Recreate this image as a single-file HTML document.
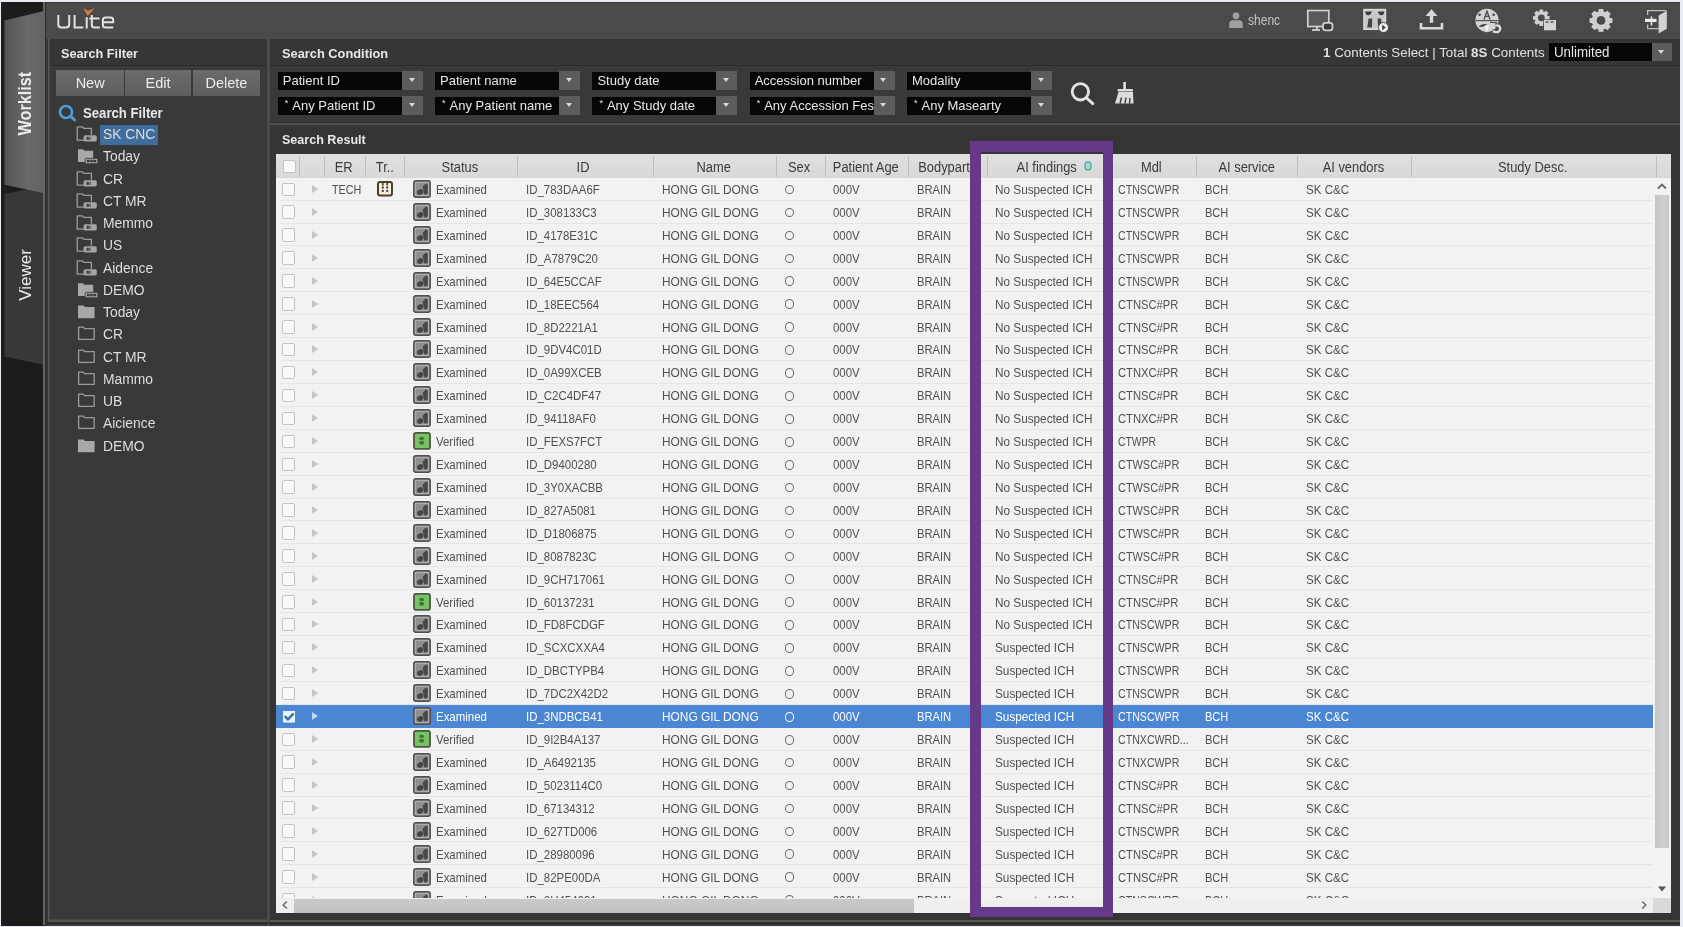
<!DOCTYPE html>
<html><head><meta charset="utf-8">
<style>
*{box-sizing:border-box;margin:0;padding:0}
html,body{width:1683px;height:927px;overflow:hidden;background:#e9edf3;font-family:"Liberation Sans",sans-serif}
.abs{position:absolute;white-space:nowrap}
.ico{position:absolute}
#app{position:absolute;left:1px;top:2px;width:1679px;height:923.5px;background:#474747}
#side{position:absolute;left:1px;top:2px;width:43.5px;height:923.5px;background:#1c1c1c}
#sideline{position:absolute;left:43px;top:2px;width:1.6px;height:923px;background:#646464}
#sideline2{position:absolute;left:44.6px;top:2px;width:1.5px;height:923px;background:#2c2c2c}
#sideline3{position:absolute;left:46.1px;top:38.5px;width:1.5px;height:887px;background:#363636}
#sideline4{position:absolute;left:47.6px;top:38.5px;width:1.9px;height:884px;background:#595959}
.vt{position:absolute;color:#ececec;font-size:17px;transform:rotate(-90deg);transform-origin:center;white-space:nowrap;text-align:center;width:80px;height:20px;line-height:20px}
#top{position:absolute;left:46.3px;top:2px;width:1633.7px;height:36.8px;background:#4a4a4a;border-top:1.6px solid #393939}
.panel{position:absolute;background:#393939}
.ph{position:absolute;background:#363636;border-bottom:1.3px solid #2b2b2b}
.pt{position:absolute;color:#e8e8e8;font-weight:bold;font-size:13.5px;white-space:nowrap;transform-origin:left}
.btn{position:absolute;top:70px;height:26px;background:linear-gradient(#6b6b6b,#5e5e5e);color:#ececec;font-size:14.5px;text-align:center;line-height:26px}
.ti{position:absolute;left:76px;height:22px;width:180px}
.fi{position:absolute;left:0;top:3px}
.tt{position:absolute;left:23.8px;top:2px;height:20px;line-height:20px;color:#dedede;font-size:14px;padding:0 3.5px;white-space:nowrap}
.tt span{display:inline-block;transform:scaleX(0.99);transform-origin:left;position:relative;top:-0.8px}
.tt.hl{width:58px}
.tt.hl{background:#3e6d9e}
.dd{position:absolute;width:145px;height:18px}
.ddt{position:absolute;left:0;top:0;width:124px;height:18px;background:#060606;color:#e8e8e8;font-size:13px;line-height:18px;padding-left:5px;white-space:nowrap;overflow:hidden}
.dda{position:absolute;left:124px;top:-1px;width:21px;height:19px;background:#5c5c5c}
.dda:after{content:"";position:absolute;left:6.8px;top:7.2px;border-left:3.7px solid transparent;border-right:3.7px solid transparent;border-top:4.3px solid #d8d8d8}
.ast{font-size:9px;position:relative;top:-4px;margin-right:4px;margin-left:2px}
#table{position:absolute;left:276.2px;top:154px;width:1394.8px;height:759px;background:#f1f1f1;overflow:hidden}
#thead{position:absolute;left:0;top:0;width:100%;height:24px;background:linear-gradient(#e0e0e0,#d8d8d8)}
.hc{position:absolute;top:1px;height:24px;line-height:24px;text-align:center;color:#3a3a3a;font-size:14px;white-space:nowrap}
.hc span{display:inline-block;transform:scaleX(0.92)}
.hsep{position:absolute;top:2px;width:1px;height:21px;background:#bdbdbd}
#tbody{position:absolute;left:0;top:24px;width:1376.8px;height:720px;overflow:hidden}
.row{position:absolute;left:0;width:100%;height:22.92px;background:#f2f2f2}
.row:after{content:"";position:absolute;left:4px;right:0;bottom:0;height:1px;background:#e5e5e5}
.row.sel{background:#4a86d2}
.row.sel:after{background:#4a86d2}
.row .c{position:absolute;top:1.3px;line-height:22px;font-size:13px;color:#505050;white-space:nowrap;transform-origin:left}
.row.sel .c{color:#fff}
.sexo{position:absolute;top:7.1px;width:9.6px;height:9.7px;border:1.5px solid #6c6c6c;border-radius:50%}
.row.sel .sexo{border-color:#fff}
.cb{position:absolute;left:5.5px;top:4.8px;width:13.5px;height:13.5px;border:1.5px solid #c4c4c4;border-radius:2px;background:#f9f9f9}
.cb.chk{border:none;background:none;left:6.6px;top:3.8px;width:12.4px;height:11.6px}
.tri{position:absolute;left:36px;top:7.3px;border-top:4.3px solid transparent;border-bottom:4.3px solid transparent;border-left:6px solid #c4c4c4}
.row.sel .tri{border-left-color:#bcd8f5}
.sicon{position:absolute;left:136.8px;top:2.3px;width:18px;height:18px}
.tricon{position:absolute;left:100.80000000000001px;top:3.5px}
#vscroll{position:absolute;left:1376.8px;top:24px;width:18px;height:720px;background:#f3f3f3}
#vthumb{position:absolute;left:1378.8px;top:40.5px;width:14px;height:653.0px;background:linear-gradient(90deg,#c4c4c4,#d0d0d0 60%,#c6c6c6)}
#hscroll{position:absolute;left:0;top:743.5px;width:1376.8px;height:15.5px;background:#efefef}
#hthumb{position:absolute;left:18.30000000000001px;top:744.5px;width:619.5px;height:14.0px;background:linear-gradient(#c9c9c9,#c2c2c2)}
#corner{position:absolute;left:1376.8px;top:743.5px;width:18px;height:15.5px;background:#d9d9d9}
#purple{position:absolute;left:970px;top:141px;width:143px;height:776px;border:solid #653a88;border-width:11px 10px 10px 11px}
.arr{position:absolute;color:#555;font-size:11px}
</style></head><body>
<div id="root" style="position:absolute;left:0;top:0;width:1683px;height:927px;will-change:transform">
<div id="app"></div>
<div id="side"></div>
<svg class="ico" style="left:0;top:0" width="46" height="400" viewBox="0 0 46 400">
<defs><linearGradient id="gw" x1="0" x2="1" y1="0" y2="0"><stop offset="0" stop-color="#555555"/><stop offset="0.6" stop-color="#696969"/><stop offset="1" stop-color="#626262"/></linearGradient></defs>
<path d="M4.5 194 L44 186 L44 365 L4.5 356.4 Z" fill="#383838"/>
<path d="M4.5 20.5 L44 11 L44 193.2 L4.5 184.8 Z" fill="url(#gw)"/>
</svg>
<div id="sideline"></div>
<div id="sideline2"></div>
<div id="sideline3"></div>
<div id="sideline4"></div>
<div class="vt" style="left:-15.2px;top:93.5px;font-weight:bold;font-size:17.5px"><span style="display:inline-block;transform:scaleX(0.925)">Worklist</span></div>
<div class="vt" style="left:-14.2px;top:265.2px">Viewer</div>
<div id="top"></div>
<svg class="ico" style="left:54px;top:5px" width="64" height="28" viewBox="54 5 64 28">
<g fill="none" stroke="#e2e2e2" stroke-width="2.0" stroke-linecap="butt">
<path d="M58.3 15 V24.5 Q58.3 27.6 61.5 27.6 H66 Q69.2 27.6 69.2 24.5 V15"/>
<path d="M74.6 15 V27.6 H83.3"/>
<path d="M86.7 17.2 V28.6"/>
<path d="M89.3 18.4 H99.5 M91.8 15 V25 Q91.8 27.6 94.5 27.6 H99.8"/>
<path d="M113.2 27.6 H105.5 Q102.9 27.6 102.9 25 V20 Q102.9 17.4 105.5 17.4 H110.6 Q113.2 17.4 113.2 20 V22.3 H103.5"/>
</g>
<path d="M83 8 L88 10.8 L94.5 8.2 L87.8 16 Z" fill="#d97b35"/>
</svg>

<svg class="ico" style="left:1228px;top:11px" width="16" height="18" viewBox="0 0 16 18"><circle cx="8" cy="4.8" r="3.4" fill="#a0a0a0"/><path d="M1.2 17 V13 Q1.2 9.2 5 9.2 H11 Q14.8 9.2 14.8 13 V17 Z" fill="#a0a0a0"/></svg>
<div class="abs" style="left:1248px;top:11.5px;color:#c4c4c4;font-size:14px;transform:scaleX(0.86);transform-origin:left">shenc</div>
<svg class="ico" style="left:1306px;top:9px" width="28" height="23" viewBox="0 0 28 23"><rect x="1.8" y="1.5" width="21" height="16" fill="#5a5a5a" stroke="#d0d0d0" stroke-width="1.7"/><path d="M6 21 H14" stroke="#d0d0d0" stroke-width="1.8"/><path d="M11 17.5 V21" stroke="#d0d0d0" stroke-width="1.8"/><rect x="17" y="13.8" width="9.5" height="7.5" rx="2.5" fill="#3a3a3a" stroke="#d0d0d0" stroke-width="1.8"/></svg>
<svg class="ico" style="left:1362px;top:8px" width="30" height="26" viewBox="0 0 30 26"><rect x="2" y="1.6" width="21.4" height="19.6" fill="#c8c8c8" stroke="#d8d8d8" stroke-width="1.6"/><path d="M3.2 3.4 H9.8 Q9 7.2 6.3 7.2 Q3.5 7.2 3.2 3.4 Z M16 3.4 H22.4 Q22 7.2 19.2 7.2 Q16.6 7.2 16 3.4 Z" fill="#3c3c3c"/><path d="M5.2 19.6 L6.6 10.4 H10.2 L10 19.6 Z M15.5 10.6 H19 L19.8 17 L16 18 Z" fill="#444"/><circle cx="21.5" cy="19.5" r="5" fill="#ececec" stroke="#3a3a3a" stroke-width="0.8"/><path d="M20.3 16.8 L23.6 19.5 L20.3 22.4 Z" fill="#333"/></svg>
<svg class="ico" style="left:1419px;top:8px" width="25" height="22" viewBox="0 0 25 22"><path d="M12.5 1.2 L18.5 8 H14.2 V14.8 H10.8 V8 H6.5 Z" fill="#d8d8d8"/><path d="M2 15 V20.2 H23 V15" fill="none" stroke="#d8d8d8" stroke-width="2.6"/></svg>
<svg class="ico" style="left:1474px;top:8px" width="29" height="26" viewBox="0 0 29 26"><circle cx="13" cy="12.3" r="11.6" fill="#d4d4d4"/><path d="M1.4 12.6 H24.6" stroke="#4a4a4a" stroke-width="1.1"/><path d="M10 11.5 L13 3.2 L16 11.5 M11.3 8.3 H14.7" stroke="#4a4a4a" stroke-width="1.3" fill="none"/><circle cx="5.6" cy="6.8" r="1.3" fill="#444"/><circle cx="19.6" cy="6.8" r="1.3" fill="#444"/><path d="M4.5 18.5 Q8.5 14.6 13.5 16.6 Q9 20 4.5 18.5 Z" fill="#444"/><path d="M10.6 17.6 L12.7 25 L15 17.6 Z" fill="#f0f0f0"/><path d="M18.8 23.4 Q26 25.6 26.2 20.6 Q26.2 16.6 21.2 17.6" stroke="#4a4a4a" stroke-width="4.5" fill="none"/><path d="M18.8 23.4 Q26 25.6 26.2 20.6 Q26.2 16.6 21.2 17.6" stroke="#dcdcdc" stroke-width="2.4" fill="none"/><path d="M16 14.5 H23 M17 14.5 v-1" stroke="#4a4a4a" stroke-width="1"/></svg>
<svg class="ico" style="left:1532px;top:8px" width="26" height="24" viewBox="0 0 26 24"><path d="M7.85 3.98 L8.02 2.11 L10.58 2.11 L10.75 3.98 L12.39 4.66 L13.84 3.45 L15.65 5.26 L14.44 6.71 L15.12 8.35 L16.99 8.52 L16.99 11.08 L15.12 11.25 L14.44 12.89 L15.65 14.34 L13.84 16.15 L12.39 14.94 L10.75 15.62 L10.58 17.49 L8.02 17.49 L7.85 15.62 L6.21 14.94 L4.76 16.15 L2.95 14.34 L4.16 12.89 L3.48 11.25 L1.61 11.08 L1.61 8.52 L3.48 8.35 L4.16 6.71 L2.95 5.26 L4.76 3.45 L6.21 4.66 Z" fill="#d0d0d0" stroke="#d0d0d0" stroke-width="1.2" stroke-linejoin="round"/><circle cx="9.3" cy="9.8" r="3.4" fill="#4a4a4a"/><rect x="11.3" y="11.3" width="13.5" height="11.5" fill="#4a4a4a"/><rect x="12" y="12" width="12" height="10.3" fill="#d4d4d4"/><path d="M13.5 14 h3 M18.5 14 h3" stroke="#555" stroke-width="1.5"/></svg>
<svg class="ico" style="left:1588px;top:7.5px" width="26" height="25" viewBox="0 0 26 25"><path d="M10.93 4.05 L11.21 1.65 L14.79 1.65 L15.07 4.05 L17.44 5.03 L19.34 3.53 L21.87 6.06 L20.37 7.96 L21.35 10.33 L23.75 10.61 L23.75 14.19 L21.35 14.47 L20.37 16.84 L21.87 18.74 L19.34 21.27 L17.44 19.77 L15.07 20.75 L14.79 23.15 L11.21 23.15 L10.93 20.75 L8.56 19.77 L6.66 21.27 L4.13 18.74 L5.63 16.84 L4.65 14.47 L2.25 14.19 L2.25 10.61 L4.65 10.33 L5.63 7.96 L4.13 6.06 L6.66 3.53 L8.56 5.03 Z" fill="#cfcfcf" stroke="#cfcfcf" stroke-width="1.4" stroke-linejoin="round"/><circle cx="13" cy="12.4" r="4.4" fill="#4a4a4a"/></svg>
<svg class="ico" style="left:1643px;top:9px" width="26" height="26" viewBox="0 0 26 26"><path d="M4.6 6 V1.7 H23.3 M4.6 15.5 V19.7 H16" fill="none" stroke="#bdbdbd" stroke-width="1.3"/><path d="M15.6 6.5 L23.8 1.7 V19.7 L15.6 24.6 Z" fill="#d2d2d2"/><path d="M2 9.8 H13.5 V13 H2 Z" fill="#ececec"/><path d="M8.5 7.5 V16.5" stroke="#e4e4e4" stroke-width="1.6"/></svg>


<!-- Search filter panel -->
<div class="panel" style="left:49.5px;top:39px;width:217.5px;height:880px"></div>
<div class="ph" style="left:49.5px;top:39px;width:217.5px;height:27px"></div>
<div class="pt" style="left:61.4px;top:45.5px;transform:scaleX(0.94)">Search Filter</div>
<div class="btn" style="left:56.4px;width:67.5px">New</div>
<div class="btn" style="left:125px;width:66.2px">Edit</div>
<div class="btn" style="left:192.6px;width:67.7px">Delete</div>
<svg class="ico" style="left:58px;top:104px" width="19" height="18" viewBox="0 0 19 18"><circle cx="8" cy="8" r="6" fill="none" stroke="#4e9bd6" stroke-width="2.6"/><path d="M12.5 12.2 L16.5 16" stroke="#4e9bd6" stroke-width="3" stroke-linecap="round"/></svg>
<div class="pt" style="left:82.8px;top:105px;font-size:14px;transform:scaleX(0.94)">Search Filter</div>
<div class="ti" style="top:123.0px"><div class="fi"><svg width="22" height="16" viewBox="0 0 22 16"><path d="M8 14.2 H1.2 V0.9 H6.4 L7.8 2.3 H15.4 V8.8" fill="none" stroke="#9c9c9c" stroke-width="1.3" stroke-linejoin="round"/><rect x="7.6" y="9.2" width="13.2" height="6.2" rx="1.6" fill="#a6a6a6"/><rect x="10.6" y="10.8" width="2.2" height="3" fill="#3a3a3a"/><rect x="13.3" y="10.8" width="1.5" height="3" fill="#555"/></svg></div><span class="tt hl"><span>SK CNC</span></span></div>
<div class="ti" style="top:145.2px"><div class="fi"><svg width="22" height="16" viewBox="0 0 22 16"><path d="M2 1.2 H7 L8.5 2.7 H17.2 V10.2 H10 V14 H2 Z" fill="#a8a8a8"/><rect x="9.2" y="10.3" width="12.6" height="5.4" rx="1" fill="#a8a8a8" stroke="#383838" stroke-width="0.8"/><rect x="10.8" y="11.8" width="9.4" height="2.4" fill="#3c3c3c"/><path d="M13.8 11.8 V14.2 M17 11.8 V14.2" stroke="#999" stroke-width="0.6"/></svg></div><span class="tt"><span>Today</span></span></div>
<div class="ti" style="top:167.5px"><div class="fi"><svg width="22" height="16" viewBox="0 0 22 16"><path d="M8 14.2 H1.2 V0.9 H6.4 L7.8 2.3 H15.4 V8.8" fill="none" stroke="#9c9c9c" stroke-width="1.3" stroke-linejoin="round"/><rect x="7.6" y="9.2" width="13.2" height="6.2" rx="1.6" fill="#a6a6a6"/><rect x="10.6" y="10.8" width="2.2" height="3" fill="#3a3a3a"/><rect x="13.3" y="10.8" width="1.5" height="3" fill="#555"/></svg></div><span class="tt"><span>CR</span></span></div>
<div class="ti" style="top:189.8px"><div class="fi"><svg width="22" height="16" viewBox="0 0 22 16"><path d="M8 14.2 H1.2 V0.9 H6.4 L7.8 2.3 H15.4 V8.8" fill="none" stroke="#9c9c9c" stroke-width="1.3" stroke-linejoin="round"/><rect x="7.6" y="9.2" width="13.2" height="6.2" rx="1.6" fill="#a6a6a6"/><rect x="10.6" y="10.8" width="2.2" height="3" fill="#3a3a3a"/><rect x="13.3" y="10.8" width="1.5" height="3" fill="#555"/></svg></div><span class="tt"><span>CT MR</span></span></div>
<div class="ti" style="top:212.0px"><div class="fi"><svg width="22" height="16" viewBox="0 0 22 16"><path d="M8 14.2 H1.2 V0.9 H6.4 L7.8 2.3 H15.4 V8.8" fill="none" stroke="#9c9c9c" stroke-width="1.3" stroke-linejoin="round"/><rect x="7.6" y="9.2" width="13.2" height="6.2" rx="1.6" fill="#a6a6a6"/><rect x="10.6" y="10.8" width="2.2" height="3" fill="#3a3a3a"/><rect x="13.3" y="10.8" width="1.5" height="3" fill="#555"/></svg></div><span class="tt"><span>Memmo</span></span></div>
<div class="ti" style="top:234.2px"><div class="fi"><svg width="22" height="16" viewBox="0 0 22 16"><path d="M8 14.2 H1.2 V0.9 H6.4 L7.8 2.3 H15.4 V8.8" fill="none" stroke="#9c9c9c" stroke-width="1.3" stroke-linejoin="round"/><rect x="7.6" y="9.2" width="13.2" height="6.2" rx="1.6" fill="#a6a6a6"/><rect x="10.6" y="10.8" width="2.2" height="3" fill="#3a3a3a"/><rect x="13.3" y="10.8" width="1.5" height="3" fill="#555"/></svg></div><span class="tt"><span>US</span></span></div>
<div class="ti" style="top:256.5px"><div class="fi"><svg width="22" height="16" viewBox="0 0 22 16"><path d="M8 14.2 H1.2 V0.9 H6.4 L7.8 2.3 H15.4 V8.8" fill="none" stroke="#9c9c9c" stroke-width="1.3" stroke-linejoin="round"/><rect x="7.6" y="9.2" width="13.2" height="6.2" rx="1.6" fill="#a6a6a6"/><rect x="10.6" y="10.8" width="2.2" height="3" fill="#3a3a3a"/><rect x="13.3" y="10.8" width="1.5" height="3" fill="#555"/></svg></div><span class="tt"><span>Aidence</span></span></div>
<div class="ti" style="top:278.8px"><div class="fi"><svg width="22" height="16" viewBox="0 0 22 16"><path d="M2 1.2 H7 L8.5 2.7 H17.2 V10.2 H10 V14 H2 Z" fill="#a8a8a8"/><rect x="9.2" y="10.3" width="12.6" height="5.4" rx="1" fill="#a8a8a8" stroke="#383838" stroke-width="0.8"/><rect x="10.8" y="11.8" width="9.4" height="2.4" fill="#3c3c3c"/><path d="M13.8 11.8 V14.2 M17 11.8 V14.2" stroke="#999" stroke-width="0.6"/></svg></div><span class="tt"><span>DEMO</span></span></div>
<div class="ti" style="top:301.0px"><div class="fi"><svg width="22" height="16" viewBox="0 0 22 16"><path d="M2 1.5 H7.5 L9 3 H18.6 V14.2 H2 Z" fill="#a8a8a8"/></svg></div><span class="tt"><span>Today</span></span></div>
<div class="ti" style="top:323.2px"><div class="fi"><svg width="22" height="16" viewBox="0 0 22 16"><path d="M2.6 13.3 V1.2 H7.3 L8.6 2.6 H18.2 V13.3 Z" fill="none" stroke="#9c9c9c" stroke-width="1.3" stroke-linejoin="round"/></svg></div><span class="tt"><span>CR</span></span></div>
<div class="ti" style="top:345.5px"><div class="fi"><svg width="22" height="16" viewBox="0 0 22 16"><path d="M2.6 13.3 V1.2 H7.3 L8.6 2.6 H18.2 V13.3 Z" fill="none" stroke="#9c9c9c" stroke-width="1.3" stroke-linejoin="round"/></svg></div><span class="tt"><span>CT MR</span></span></div>
<div class="ti" style="top:367.8px"><div class="fi"><svg width="22" height="16" viewBox="0 0 22 16"><path d="M2.6 13.3 V1.2 H7.3 L8.6 2.6 H18.2 V13.3 Z" fill="none" stroke="#9c9c9c" stroke-width="1.3" stroke-linejoin="round"/></svg></div><span class="tt"><span>Mammo</span></span></div>
<div class="ti" style="top:390.0px"><div class="fi"><svg width="22" height="16" viewBox="0 0 22 16"><path d="M2.6 13.3 V1.2 H7.3 L8.6 2.6 H18.2 V13.3 Z" fill="none" stroke="#9c9c9c" stroke-width="1.3" stroke-linejoin="round"/></svg></div><span class="tt"><span>UB</span></span></div>
<div class="ti" style="top:412.2px"><div class="fi"><svg width="22" height="16" viewBox="0 0 22 16"><path d="M2.6 13.3 V1.2 H7.3 L8.6 2.6 H18.2 V13.3 Z" fill="none" stroke="#9c9c9c" stroke-width="1.3" stroke-linejoin="round"/></svg></div><span class="tt"><span>Aicience</span></span></div>
<div class="ti" style="top:434.5px"><div class="fi"><svg width="22" height="16" viewBox="0 0 22 16"><path d="M2 1.5 H7.5 L9 3 H18.6 V14.2 H2 Z" fill="#a8a8a8"/></svg></div><span class="tt"><span>DEMO</span></span></div>

<!-- Search condition panel -->
<div class="panel" style="left:270px;top:39px;width:1410px;height:82.5px"></div>
<div class="ph" style="left:270px;top:39px;width:1410px;height:27px"></div>
<div class="abs" style="left:270px;top:121.5px;width:1410px;height:1px;background:#2e2e2e"></div>
<div class="pt" style="left:282px;top:45.5px;transform:scaleX(0.95)">Search Condition</div>
<div class="dd" style="left:277.8px;top:71.5px"><div class="ddt">Patient ID</div><div class="dda"></div></div>
<div class="dd" style="left:277.8px;top:97px"><div class="ddt"><span class="ast">*</span>Any Patient ID</div><div class="dda"></div></div>
<div class="dd" style="left:435.1px;top:71.5px"><div class="ddt">Patient name</div><div class="dda"></div></div>
<div class="dd" style="left:435.1px;top:97px"><div class="ddt"><span class="ast">*</span>Any Patient name</div><div class="dda"></div></div>
<div class="dd" style="left:592.4px;top:71.5px"><div class="ddt">Study date</div><div class="dda"></div></div>
<div class="dd" style="left:592.4px;top:97px"><div class="ddt"><span class="ast">*</span>Any Study date</div><div class="dda"></div></div>
<div class="dd" style="left:749.7px;top:71.5px"><div class="ddt">Accession number</div><div class="dda"></div></div>
<div class="dd" style="left:749.7px;top:97px"><div class="ddt"><span class="ast">*</span>Any Accession Fes</div><div class="dda"></div></div>
<div class="dd" style="left:907.0px;top:71.5px"><div class="ddt">Modality</div><div class="dda"></div></div>
<div class="dd" style="left:907.0px;top:97px"><div class="ddt"><span class="ast">*</span>Any Masearty</div><div class="dda"></div></div>
<svg class="ico" style="left:1069px;top:81px" width="27" height="25" viewBox="0 0 27 25"><circle cx="11.4" cy="10.8" r="8.2" fill="none" stroke="#e4e4e4" stroke-width="2.8"/><path d="M17.6 17 L23.8 22.6" stroke="#e4e4e4" stroke-width="3" stroke-linecap="round"/></svg>
<svg class="ico" style="left:1114px;top:82px" width="21" height="22" viewBox="0 0 21 22"><rect x="9.3" y="0" width="2.6" height="8" fill="#dedede"/><rect x="3.5" y="7" width="15.5" height="2.6" rx="1" fill="#dedede"/><path d="M4.5 10 H19 L19.5 21.5 H1 Z" fill="#dcdcdc"/><path d="M7.5 15.5 L6 21.5 M12 15.5 L11 21.5 M16 16 L15.5 21.5" stroke="#383838" stroke-width="1.4"/></svg>
<div class="abs" style="left:1322.8px;top:44.5px;color:#e2e2e2;font-size:13.5px;transform:scaleX(0.99);transform-origin:left"><b>1</b> Contents Select | Total <b>8S</b> Contents</div>
<div class="dd" style="left:1549.2px;top:42.7px;width:122.8px;height:18px"><div class="ddt" style="width:102.4px;font-size:14px"><span style="display:inline-block;transform:scaleX(0.95);transform-origin:left">Unlimited</span></div><div class="dda" style="left:102.4px;width:20.4px;top:0;height:18px"></div></div>

<!-- Search result panel -->
<div class="abs" style="left:270px;top:123px;width:1410px;height:1.5px;background:#525252"></div>
<div class="panel" style="left:270px;top:124.5px;width:1410px;height:795.5px;background:#353535"></div>
<div class="pt" style="left:281.7px;top:132px;transform:scaleX(0.93)">Search Result</div>
<div class="abs" style="left:270px;top:920px;width:1410px;height:2px;background:#575757"></div>
<div class="abs" style="left:47.6px;top:920px;width:219.4px;height:2.1px;background:#555"></div><div class="abs" style="left:46px;top:922.1px;width:1634px;height:3.4px;background:#2e2e2e"></div>
<div class="abs" style="left:268px;top:39px;width:1.3px;height:887px;background:#505050"></div>
<div id="table">
<div id="thead"><div class="cb" style="left:6.5px;top:5.5px;width:13px;height:13px"></div>
<div class="hc" style="left:7.3px;width:120px"><span>ER</span></div>
<div class="hc" style="left:48.3px;width:120px"><span>Tr..</span></div>
<div class="hc" style="left:123.2px;width:120px"><span>Status</span></div>
<div class="hc" style="left:247.3px;width:120px"><span>ID</span></div>
<div class="hc" style="left:377.3px;width:120px"><span>Name</span></div>
<div class="hc" style="left:463.3px;width:120px"><span>Sex</span></div>
<div class="hc" style="left:529.2px;width:120px"><span>Patient Age</span></div>
<div class="hc" style="left:607.8px;width:120px"><span>Bodypart</span></div>
<div class="hc" style="left:710.5px;width:120px"><span>AI findings</span></div>
<div class="hc" style="left:815.3px;width:120px"><span>Mdl</span></div>
<div class="hc" style="left:910.3px;width:120px"><span>AI service</span></div>
<div class="hc" style="left:1017.3px;width:120px"><span>AI vendors</span></div>
<div class="hc" style="left:1196.8px;width:120px"><span>Study Desc.</span></div>
<div class="hsep" style="left:23.3px"></div>
<div class="hsep" style="left:48.2px"></div>
<div class="hsep" style="left:89.3px"></div>
<div class="hsep" style="left:127.8px"></div>
<div class="hsep" style="left:240.8px"></div>
<div class="hsep" style="left:376.8px"></div>
<div class="hsep" style="left:500.3px"></div>
<div class="hsep" style="left:549.1px"></div>
<div class="hsep" style="left:631.8px"></div>
<div class="hsep" style="left:710.4px"></div>
<div class="hsep" style="left:826.8px"></div>
<div class="hsep" style="left:919.8px"></div>
<div class="hsep" style="left:1021.2px"></div>
<div class="hsep" style="left:1134.8px"></div>
<div class="hsep" style="left:1379.8px"></div>
<svg class="ico" style="left:808.3px;top:7px" width="8" height="10" viewBox="0 0 8 10"><rect x="1" y="1" width="6" height="8" rx="3" fill="#a8d8d0" stroke="#4fb0a8" stroke-width="1.4"/></svg></div>
<div id="tbody"><div class="row" style="top:-0.30px"><div class="cb"></div><div class="tri"></div><span class="c" style="left:56.0px;transform:scaleX(0.83)">TECH</span><svg class="tricon" width="16" height="16" viewBox="0 0 16 16"><rect x="1" y="1" width="14" height="13.6" rx="2" fill="#f6f0e2" stroke="#4a3f2f" stroke-width="2"/><path d="M5.8 2 v2.5 M10.2 2 v2.5" stroke="#4a3f2f" stroke-width="1.6"/><circle cx="5.8" cy="6.5" r="1.15" fill="#4a3f2f"/><circle cx="10.2" cy="6.5" r="1.15" fill="#4a3f2f"/><circle cx="5.8" cy="10" r="1.15" fill="#4a3f2f"/><circle cx="10.2" cy="10" r="1.15" fill="#4a3f2f"/></svg><div class="sicon"><svg width="18" height="18" viewBox="0 0 18 18"><rect x="0.8" y="0.8" width="16.4" height="16.4" rx="2" fill="#8f8f8f" stroke="#505050" stroke-width="1.5"/><rect x="2.4" y="2.4" width="13.2" height="13.2" fill="none" stroke="#b4b4b4" stroke-width="0.8"/><ellipse cx="7.2" cy="12" rx="3.2" ry="2.7" transform="rotate(-30 7.2 12)" fill="#454545"/><path d="M9.6 6.8 L12.8 3.6 L14.8 4.6 L14.8 13.2 Q13.5 14.8 11.5 14.5 Q10.3 10.5 9.6 6.8 Z" fill="#484848"/></svg></div><span class="c" style="left:160.2px;transform:scaleX(0.88)">Examined</span><span class="c" style="left:250.1px;transform:scaleX(0.88)">ID_783DAA6F</span><span class="c" style="left:385.8px;transform:scaleX(0.915)">HONG GIL DONG</span><div class="sexo" style="left:508.4px"></div><span class="c" style="left:556.8px;transform:scaleX(0.88)">000V</span><span class="c" style="left:641.0px;transform:scaleX(0.86)">BRAIN</span><span class="c" style="left:718.6px;transform:scaleX(0.905)">No Suspected ICH</span><span class="c" style="left:841.6px;transform:scaleX(0.817)">CTNSCWPR</span><span class="c" style="left:928.6px;transform:scaleX(0.85)">BCH</span><span class="c" style="left:1029.6px;transform:scaleX(0.89)">SK C&amp;C</span></div>
<div class="row" style="top:22.62px"><div class="cb"></div><div class="tri"></div><div class="sicon"><svg width="18" height="18" viewBox="0 0 18 18"><rect x="0.8" y="0.8" width="16.4" height="16.4" rx="2" fill="#8f8f8f" stroke="#505050" stroke-width="1.5"/><rect x="2.4" y="2.4" width="13.2" height="13.2" fill="none" stroke="#b4b4b4" stroke-width="0.8"/><ellipse cx="7.2" cy="12" rx="3.2" ry="2.7" transform="rotate(-30 7.2 12)" fill="#454545"/><path d="M9.6 6.8 L12.8 3.6 L14.8 4.6 L14.8 13.2 Q13.5 14.8 11.5 14.5 Q10.3 10.5 9.6 6.8 Z" fill="#484848"/></svg></div><span class="c" style="left:160.2px;transform:scaleX(0.88)">Examined</span><span class="c" style="left:250.1px;transform:scaleX(0.88)">ID_308133C3</span><span class="c" style="left:385.8px;transform:scaleX(0.915)">HONG GIL DONG</span><div class="sexo" style="left:508.4px"></div><span class="c" style="left:556.8px;transform:scaleX(0.88)">000V</span><span class="c" style="left:641.0px;transform:scaleX(0.86)">BRAIN</span><span class="c" style="left:718.6px;transform:scaleX(0.905)">No Suspected ICH</span><span class="c" style="left:841.6px;transform:scaleX(0.817)">CTNSCWPR</span><span class="c" style="left:928.6px;transform:scaleX(0.85)">BCH</span><span class="c" style="left:1029.6px;transform:scaleX(0.89)">SK C&amp;C</span></div>
<div class="row" style="top:45.54px"><div class="cb"></div><div class="tri"></div><div class="sicon"><svg width="18" height="18" viewBox="0 0 18 18"><rect x="0.8" y="0.8" width="16.4" height="16.4" rx="2" fill="#8f8f8f" stroke="#505050" stroke-width="1.5"/><rect x="2.4" y="2.4" width="13.2" height="13.2" fill="none" stroke="#b4b4b4" stroke-width="0.8"/><ellipse cx="7.2" cy="12" rx="3.2" ry="2.7" transform="rotate(-30 7.2 12)" fill="#454545"/><path d="M9.6 6.8 L12.8 3.6 L14.8 4.6 L14.8 13.2 Q13.5 14.8 11.5 14.5 Q10.3 10.5 9.6 6.8 Z" fill="#484848"/></svg></div><span class="c" style="left:160.2px;transform:scaleX(0.88)">Examined</span><span class="c" style="left:250.1px;transform:scaleX(0.88)">ID_4178E31C</span><span class="c" style="left:385.8px;transform:scaleX(0.915)">HONG GIL DONG</span><div class="sexo" style="left:508.4px"></div><span class="c" style="left:556.8px;transform:scaleX(0.88)">000V</span><span class="c" style="left:641.0px;transform:scaleX(0.86)">BRAIN</span><span class="c" style="left:718.6px;transform:scaleX(0.905)">No Suspected ICH</span><span class="c" style="left:841.6px;transform:scaleX(0.817)">CTNSCWPR</span><span class="c" style="left:928.6px;transform:scaleX(0.85)">BCH</span><span class="c" style="left:1029.6px;transform:scaleX(0.89)">SK C&amp;C</span></div>
<div class="row" style="top:68.46px"><div class="cb"></div><div class="tri"></div><div class="sicon"><svg width="18" height="18" viewBox="0 0 18 18"><rect x="0.8" y="0.8" width="16.4" height="16.4" rx="2" fill="#8f8f8f" stroke="#505050" stroke-width="1.5"/><rect x="2.4" y="2.4" width="13.2" height="13.2" fill="none" stroke="#b4b4b4" stroke-width="0.8"/><ellipse cx="7.2" cy="12" rx="3.2" ry="2.7" transform="rotate(-30 7.2 12)" fill="#454545"/><path d="M9.6 6.8 L12.8 3.6 L14.8 4.6 L14.8 13.2 Q13.5 14.8 11.5 14.5 Q10.3 10.5 9.6 6.8 Z" fill="#484848"/></svg></div><span class="c" style="left:160.2px;transform:scaleX(0.88)">Examined</span><span class="c" style="left:250.1px;transform:scaleX(0.88)">ID_A7879C20</span><span class="c" style="left:385.8px;transform:scaleX(0.915)">HONG GIL DONG</span><div class="sexo" style="left:508.4px"></div><span class="c" style="left:556.8px;transform:scaleX(0.88)">000V</span><span class="c" style="left:641.0px;transform:scaleX(0.86)">BRAIN</span><span class="c" style="left:718.6px;transform:scaleX(0.905)">No Suspected ICH</span><span class="c" style="left:841.6px;transform:scaleX(0.817)">CTNSCWPR</span><span class="c" style="left:928.6px;transform:scaleX(0.85)">BCH</span><span class="c" style="left:1029.6px;transform:scaleX(0.89)">SK C&amp;C</span></div>
<div class="row" style="top:91.38px"><div class="cb"></div><div class="tri"></div><div class="sicon"><svg width="18" height="18" viewBox="0 0 18 18"><rect x="0.8" y="0.8" width="16.4" height="16.4" rx="2" fill="#8f8f8f" stroke="#505050" stroke-width="1.5"/><rect x="2.4" y="2.4" width="13.2" height="13.2" fill="none" stroke="#b4b4b4" stroke-width="0.8"/><ellipse cx="7.2" cy="12" rx="3.2" ry="2.7" transform="rotate(-30 7.2 12)" fill="#454545"/><path d="M9.6 6.8 L12.8 3.6 L14.8 4.6 L14.8 13.2 Q13.5 14.8 11.5 14.5 Q10.3 10.5 9.6 6.8 Z" fill="#484848"/></svg></div><span class="c" style="left:160.2px;transform:scaleX(0.88)">Examined</span><span class="c" style="left:250.1px;transform:scaleX(0.88)">ID_64E5CCAF</span><span class="c" style="left:385.8px;transform:scaleX(0.915)">HONG GIL DONG</span><div class="sexo" style="left:508.4px"></div><span class="c" style="left:556.8px;transform:scaleX(0.88)">000V</span><span class="c" style="left:641.0px;transform:scaleX(0.86)">BRAIN</span><span class="c" style="left:718.6px;transform:scaleX(0.905)">No Suspected ICH</span><span class="c" style="left:841.6px;transform:scaleX(0.817)">CTNSCWPR</span><span class="c" style="left:928.6px;transform:scaleX(0.85)">BCH</span><span class="c" style="left:1029.6px;transform:scaleX(0.89)">SK C&amp;C</span></div>
<div class="row" style="top:114.30px"><div class="cb"></div><div class="tri"></div><div class="sicon"><svg width="18" height="18" viewBox="0 0 18 18"><rect x="0.8" y="0.8" width="16.4" height="16.4" rx="2" fill="#8f8f8f" stroke="#505050" stroke-width="1.5"/><rect x="2.4" y="2.4" width="13.2" height="13.2" fill="none" stroke="#b4b4b4" stroke-width="0.8"/><ellipse cx="7.2" cy="12" rx="3.2" ry="2.7" transform="rotate(-30 7.2 12)" fill="#454545"/><path d="M9.6 6.8 L12.8 3.6 L14.8 4.6 L14.8 13.2 Q13.5 14.8 11.5 14.5 Q10.3 10.5 9.6 6.8 Z" fill="#484848"/></svg></div><span class="c" style="left:160.2px;transform:scaleX(0.88)">Examined</span><span class="c" style="left:250.1px;transform:scaleX(0.88)">ID_18EEC564</span><span class="c" style="left:385.8px;transform:scaleX(0.915)">HONG GIL DONG</span><div class="sexo" style="left:508.4px"></div><span class="c" style="left:556.8px;transform:scaleX(0.88)">000V</span><span class="c" style="left:641.0px;transform:scaleX(0.86)">BRAIN</span><span class="c" style="left:718.6px;transform:scaleX(0.905)">No Suspected ICH</span><span class="c" style="left:841.6px;transform:scaleX(0.862)">CTNSC#PR</span><span class="c" style="left:928.6px;transform:scaleX(0.85)">BCH</span><span class="c" style="left:1029.6px;transform:scaleX(0.89)">SK C&amp;C</span></div>
<div class="row" style="top:137.22px"><div class="cb"></div><div class="tri"></div><div class="sicon"><svg width="18" height="18" viewBox="0 0 18 18"><rect x="0.8" y="0.8" width="16.4" height="16.4" rx="2" fill="#8f8f8f" stroke="#505050" stroke-width="1.5"/><rect x="2.4" y="2.4" width="13.2" height="13.2" fill="none" stroke="#b4b4b4" stroke-width="0.8"/><ellipse cx="7.2" cy="12" rx="3.2" ry="2.7" transform="rotate(-30 7.2 12)" fill="#454545"/><path d="M9.6 6.8 L12.8 3.6 L14.8 4.6 L14.8 13.2 Q13.5 14.8 11.5 14.5 Q10.3 10.5 9.6 6.8 Z" fill="#484848"/></svg></div><span class="c" style="left:160.2px;transform:scaleX(0.88)">Examined</span><span class="c" style="left:250.1px;transform:scaleX(0.88)">ID_8D2221A1</span><span class="c" style="left:385.8px;transform:scaleX(0.915)">HONG GIL DONG</span><div class="sexo" style="left:508.4px"></div><span class="c" style="left:556.8px;transform:scaleX(0.88)">000V</span><span class="c" style="left:641.0px;transform:scaleX(0.86)">BRAIN</span><span class="c" style="left:718.6px;transform:scaleX(0.905)">No Suspected ICH</span><span class="c" style="left:841.6px;transform:scaleX(0.862)">CTNSC#PR</span><span class="c" style="left:928.6px;transform:scaleX(0.85)">BCH</span><span class="c" style="left:1029.6px;transform:scaleX(0.89)">SK C&amp;C</span></div>
<div class="row" style="top:160.14px"><div class="cb"></div><div class="tri"></div><div class="sicon"><svg width="18" height="18" viewBox="0 0 18 18"><rect x="0.8" y="0.8" width="16.4" height="16.4" rx="2" fill="#8f8f8f" stroke="#505050" stroke-width="1.5"/><rect x="2.4" y="2.4" width="13.2" height="13.2" fill="none" stroke="#b4b4b4" stroke-width="0.8"/><ellipse cx="7.2" cy="12" rx="3.2" ry="2.7" transform="rotate(-30 7.2 12)" fill="#454545"/><path d="M9.6 6.8 L12.8 3.6 L14.8 4.6 L14.8 13.2 Q13.5 14.8 11.5 14.5 Q10.3 10.5 9.6 6.8 Z" fill="#484848"/></svg></div><span class="c" style="left:160.2px;transform:scaleX(0.88)">Examined</span><span class="c" style="left:250.1px;transform:scaleX(0.88)">ID_9DV4C01D</span><span class="c" style="left:385.8px;transform:scaleX(0.915)">HONG GIL DONG</span><div class="sexo" style="left:508.4px"></div><span class="c" style="left:556.8px;transform:scaleX(0.88)">000V</span><span class="c" style="left:641.0px;transform:scaleX(0.86)">BRAIN</span><span class="c" style="left:718.6px;transform:scaleX(0.905)">No Suspected ICH</span><span class="c" style="left:841.6px;transform:scaleX(0.862)">CTNSC#PR</span><span class="c" style="left:928.6px;transform:scaleX(0.85)">BCH</span><span class="c" style="left:1029.6px;transform:scaleX(0.89)">SK C&amp;C</span></div>
<div class="row" style="top:183.06px"><div class="cb"></div><div class="tri"></div><div class="sicon"><svg width="18" height="18" viewBox="0 0 18 18"><rect x="0.8" y="0.8" width="16.4" height="16.4" rx="2" fill="#8f8f8f" stroke="#505050" stroke-width="1.5"/><rect x="2.4" y="2.4" width="13.2" height="13.2" fill="none" stroke="#b4b4b4" stroke-width="0.8"/><ellipse cx="7.2" cy="12" rx="3.2" ry="2.7" transform="rotate(-30 7.2 12)" fill="#454545"/><path d="M9.6 6.8 L12.8 3.6 L14.8 4.6 L14.8 13.2 Q13.5 14.8 11.5 14.5 Q10.3 10.5 9.6 6.8 Z" fill="#484848"/></svg></div><span class="c" style="left:160.2px;transform:scaleX(0.88)">Examined</span><span class="c" style="left:250.1px;transform:scaleX(0.88)">ID_0A99XCEB</span><span class="c" style="left:385.8px;transform:scaleX(0.915)">HONG GIL DONG</span><div class="sexo" style="left:508.4px"></div><span class="c" style="left:556.8px;transform:scaleX(0.88)">000V</span><span class="c" style="left:641.0px;transform:scaleX(0.86)">BRAIN</span><span class="c" style="left:718.6px;transform:scaleX(0.905)">No Suspected ICH</span><span class="c" style="left:841.6px;transform:scaleX(0.862)">CTNXC#PR</span><span class="c" style="left:928.6px;transform:scaleX(0.85)">BCH</span><span class="c" style="left:1029.6px;transform:scaleX(0.89)">SK C&amp;C</span></div>
<div class="row" style="top:205.98px"><div class="cb"></div><div class="tri"></div><div class="sicon"><svg width="18" height="18" viewBox="0 0 18 18"><rect x="0.8" y="0.8" width="16.4" height="16.4" rx="2" fill="#8f8f8f" stroke="#505050" stroke-width="1.5"/><rect x="2.4" y="2.4" width="13.2" height="13.2" fill="none" stroke="#b4b4b4" stroke-width="0.8"/><ellipse cx="7.2" cy="12" rx="3.2" ry="2.7" transform="rotate(-30 7.2 12)" fill="#454545"/><path d="M9.6 6.8 L12.8 3.6 L14.8 4.6 L14.8 13.2 Q13.5 14.8 11.5 14.5 Q10.3 10.5 9.6 6.8 Z" fill="#484848"/></svg></div><span class="c" style="left:160.2px;transform:scaleX(0.88)">Examined</span><span class="c" style="left:250.1px;transform:scaleX(0.88)">ID_C2C4DF47</span><span class="c" style="left:385.8px;transform:scaleX(0.915)">HONG GIL DONG</span><div class="sexo" style="left:508.4px"></div><span class="c" style="left:556.8px;transform:scaleX(0.88)">000V</span><span class="c" style="left:641.0px;transform:scaleX(0.86)">BRAIN</span><span class="c" style="left:718.6px;transform:scaleX(0.905)">No Suspected ICH</span><span class="c" style="left:841.6px;transform:scaleX(0.862)">CTNSC#PR</span><span class="c" style="left:928.6px;transform:scaleX(0.85)">BCH</span><span class="c" style="left:1029.6px;transform:scaleX(0.89)">SK C&amp;C</span></div>
<div class="row" style="top:228.90px"><div class="cb"></div><div class="tri"></div><div class="sicon"><svg width="18" height="18" viewBox="0 0 18 18"><rect x="0.8" y="0.8" width="16.4" height="16.4" rx="2" fill="#8f8f8f" stroke="#505050" stroke-width="1.5"/><rect x="2.4" y="2.4" width="13.2" height="13.2" fill="none" stroke="#b4b4b4" stroke-width="0.8"/><ellipse cx="7.2" cy="12" rx="3.2" ry="2.7" transform="rotate(-30 7.2 12)" fill="#454545"/><path d="M9.6 6.8 L12.8 3.6 L14.8 4.6 L14.8 13.2 Q13.5 14.8 11.5 14.5 Q10.3 10.5 9.6 6.8 Z" fill="#484848"/></svg></div><span class="c" style="left:160.2px;transform:scaleX(0.88)">Examined</span><span class="c" style="left:250.1px;transform:scaleX(0.88)">ID_94118AF0</span><span class="c" style="left:385.8px;transform:scaleX(0.915)">HONG GIL DONG</span><div class="sexo" style="left:508.4px"></div><span class="c" style="left:556.8px;transform:scaleX(0.88)">000V</span><span class="c" style="left:641.0px;transform:scaleX(0.86)">BRAIN</span><span class="c" style="left:718.6px;transform:scaleX(0.905)">No Suspected ICH</span><span class="c" style="left:841.6px;transform:scaleX(0.862)">CTNXC#PR</span><span class="c" style="left:928.6px;transform:scaleX(0.85)">BCH</span><span class="c" style="left:1029.6px;transform:scaleX(0.89)">SK C&amp;C</span></div>
<div class="row" style="top:251.82px"><div class="cb"></div><div class="tri"></div><div class="sicon"><svg width="18" height="18" viewBox="0 0 18 18"><rect x="1" y="0.9" width="16" height="16" rx="2" fill="#78c266" stroke="#4b5842" stroke-width="1.8"/><ellipse cx="8.6" cy="6.4" rx="2.5" ry="1.6" fill="#45703c"/><ellipse cx="8.6" cy="10.8" rx="2.6" ry="2" fill="#45703c"/></svg></div><span class="c" style="left:160.2px;transform:scaleX(0.88)">Verified</span><span class="c" style="left:250.1px;transform:scaleX(0.88)">ID_FEXS7FCT</span><span class="c" style="left:385.8px;transform:scaleX(0.915)">HONG GIL DONG</span><div class="sexo" style="left:508.4px"></div><span class="c" style="left:556.8px;transform:scaleX(0.88)">000V</span><span class="c" style="left:641.0px;transform:scaleX(0.86)">BRAIN</span><span class="c" style="left:718.6px;transform:scaleX(0.905)">No Suspected ICH</span><span class="c" style="left:841.6px;transform:scaleX(0.8)">CTWPR</span><span class="c" style="left:928.6px;transform:scaleX(0.85)">BCH</span><span class="c" style="left:1029.6px;transform:scaleX(0.89)">SK C&amp;C</span></div>
<div class="row" style="top:274.74px"><div class="cb"></div><div class="tri"></div><div class="sicon"><svg width="18" height="18" viewBox="0 0 18 18"><rect x="0.8" y="0.8" width="16.4" height="16.4" rx="2" fill="#8f8f8f" stroke="#505050" stroke-width="1.5"/><rect x="2.4" y="2.4" width="13.2" height="13.2" fill="none" stroke="#b4b4b4" stroke-width="0.8"/><ellipse cx="7.2" cy="12" rx="3.2" ry="2.7" transform="rotate(-30 7.2 12)" fill="#454545"/><path d="M9.6 6.8 L12.8 3.6 L14.8 4.6 L14.8 13.2 Q13.5 14.8 11.5 14.5 Q10.3 10.5 9.6 6.8 Z" fill="#484848"/></svg></div><span class="c" style="left:160.2px;transform:scaleX(0.88)">Examined</span><span class="c" style="left:250.1px;transform:scaleX(0.88)">ID_D9400280</span><span class="c" style="left:385.8px;transform:scaleX(0.915)">HONG GIL DONG</span><div class="sexo" style="left:508.4px"></div><span class="c" style="left:556.8px;transform:scaleX(0.88)">000V</span><span class="c" style="left:641.0px;transform:scaleX(0.86)">BRAIN</span><span class="c" style="left:718.6px;transform:scaleX(0.905)">No Suspected ICH</span><span class="c" style="left:841.6px;transform:scaleX(0.84)">CTWSC#PR</span><span class="c" style="left:928.6px;transform:scaleX(0.85)">BCH</span><span class="c" style="left:1029.6px;transform:scaleX(0.89)">SK C&amp;C</span></div>
<div class="row" style="top:297.66px"><div class="cb"></div><div class="tri"></div><div class="sicon"><svg width="18" height="18" viewBox="0 0 18 18"><rect x="0.8" y="0.8" width="16.4" height="16.4" rx="2" fill="#8f8f8f" stroke="#505050" stroke-width="1.5"/><rect x="2.4" y="2.4" width="13.2" height="13.2" fill="none" stroke="#b4b4b4" stroke-width="0.8"/><ellipse cx="7.2" cy="12" rx="3.2" ry="2.7" transform="rotate(-30 7.2 12)" fill="#454545"/><path d="M9.6 6.8 L12.8 3.6 L14.8 4.6 L14.8 13.2 Q13.5 14.8 11.5 14.5 Q10.3 10.5 9.6 6.8 Z" fill="#484848"/></svg></div><span class="c" style="left:160.2px;transform:scaleX(0.88)">Examined</span><span class="c" style="left:250.1px;transform:scaleX(0.88)">ID_3Y0XACBB</span><span class="c" style="left:385.8px;transform:scaleX(0.915)">HONG GIL DONG</span><div class="sexo" style="left:508.4px"></div><span class="c" style="left:556.8px;transform:scaleX(0.88)">000V</span><span class="c" style="left:641.0px;transform:scaleX(0.86)">BRAIN</span><span class="c" style="left:718.6px;transform:scaleX(0.905)">No Suspected ICH</span><span class="c" style="left:841.6px;transform:scaleX(0.84)">CTWSC#PR</span><span class="c" style="left:928.6px;transform:scaleX(0.85)">BCH</span><span class="c" style="left:1029.6px;transform:scaleX(0.89)">SK C&amp;C</span></div>
<div class="row" style="top:320.58px"><div class="cb"></div><div class="tri"></div><div class="sicon"><svg width="18" height="18" viewBox="0 0 18 18"><rect x="0.8" y="0.8" width="16.4" height="16.4" rx="2" fill="#8f8f8f" stroke="#505050" stroke-width="1.5"/><rect x="2.4" y="2.4" width="13.2" height="13.2" fill="none" stroke="#b4b4b4" stroke-width="0.8"/><ellipse cx="7.2" cy="12" rx="3.2" ry="2.7" transform="rotate(-30 7.2 12)" fill="#454545"/><path d="M9.6 6.8 L12.8 3.6 L14.8 4.6 L14.8 13.2 Q13.5 14.8 11.5 14.5 Q10.3 10.5 9.6 6.8 Z" fill="#484848"/></svg></div><span class="c" style="left:160.2px;transform:scaleX(0.88)">Examined</span><span class="c" style="left:250.1px;transform:scaleX(0.88)">ID_827A5081</span><span class="c" style="left:385.8px;transform:scaleX(0.915)">HONG GIL DONG</span><div class="sexo" style="left:508.4px"></div><span class="c" style="left:556.8px;transform:scaleX(0.88)">000V</span><span class="c" style="left:641.0px;transform:scaleX(0.86)">BRAIN</span><span class="c" style="left:718.6px;transform:scaleX(0.905)">No Suspected ICH</span><span class="c" style="left:841.6px;transform:scaleX(0.84)">CTWSC#PR</span><span class="c" style="left:928.6px;transform:scaleX(0.85)">BCH</span><span class="c" style="left:1029.6px;transform:scaleX(0.89)">SK C&amp;C</span></div>
<div class="row" style="top:343.50px"><div class="cb"></div><div class="tri"></div><div class="sicon"><svg width="18" height="18" viewBox="0 0 18 18"><rect x="0.8" y="0.8" width="16.4" height="16.4" rx="2" fill="#8f8f8f" stroke="#505050" stroke-width="1.5"/><rect x="2.4" y="2.4" width="13.2" height="13.2" fill="none" stroke="#b4b4b4" stroke-width="0.8"/><ellipse cx="7.2" cy="12" rx="3.2" ry="2.7" transform="rotate(-30 7.2 12)" fill="#454545"/><path d="M9.6 6.8 L12.8 3.6 L14.8 4.6 L14.8 13.2 Q13.5 14.8 11.5 14.5 Q10.3 10.5 9.6 6.8 Z" fill="#484848"/></svg></div><span class="c" style="left:160.2px;transform:scaleX(0.88)">Examined</span><span class="c" style="left:250.1px;transform:scaleX(0.88)">ID_D1806875</span><span class="c" style="left:385.8px;transform:scaleX(0.915)">HONG GIL DONG</span><div class="sexo" style="left:508.4px"></div><span class="c" style="left:556.8px;transform:scaleX(0.88)">000V</span><span class="c" style="left:641.0px;transform:scaleX(0.86)">BRAIN</span><span class="c" style="left:718.6px;transform:scaleX(0.905)">No Suspected ICH</span><span class="c" style="left:841.6px;transform:scaleX(0.84)">CTWSC#PR</span><span class="c" style="left:928.6px;transform:scaleX(0.85)">BCH</span><span class="c" style="left:1029.6px;transform:scaleX(0.89)">SK C&amp;C</span></div>
<div class="row" style="top:366.42px"><div class="cb"></div><div class="tri"></div><div class="sicon"><svg width="18" height="18" viewBox="0 0 18 18"><rect x="0.8" y="0.8" width="16.4" height="16.4" rx="2" fill="#8f8f8f" stroke="#505050" stroke-width="1.5"/><rect x="2.4" y="2.4" width="13.2" height="13.2" fill="none" stroke="#b4b4b4" stroke-width="0.8"/><ellipse cx="7.2" cy="12" rx="3.2" ry="2.7" transform="rotate(-30 7.2 12)" fill="#454545"/><path d="M9.6 6.8 L12.8 3.6 L14.8 4.6 L14.8 13.2 Q13.5 14.8 11.5 14.5 Q10.3 10.5 9.6 6.8 Z" fill="#484848"/></svg></div><span class="c" style="left:160.2px;transform:scaleX(0.88)">Examined</span><span class="c" style="left:250.1px;transform:scaleX(0.88)">ID_8087823C</span><span class="c" style="left:385.8px;transform:scaleX(0.915)">HONG GIL DONG</span><div class="sexo" style="left:508.4px"></div><span class="c" style="left:556.8px;transform:scaleX(0.88)">000V</span><span class="c" style="left:641.0px;transform:scaleX(0.86)">BRAIN</span><span class="c" style="left:718.6px;transform:scaleX(0.905)">No Suspected ICH</span><span class="c" style="left:841.6px;transform:scaleX(0.84)">CTWSC#PR</span><span class="c" style="left:928.6px;transform:scaleX(0.85)">BCH</span><span class="c" style="left:1029.6px;transform:scaleX(0.89)">SK C&amp;C</span></div>
<div class="row" style="top:389.34px"><div class="cb"></div><div class="tri"></div><div class="sicon"><svg width="18" height="18" viewBox="0 0 18 18"><rect x="0.8" y="0.8" width="16.4" height="16.4" rx="2" fill="#8f8f8f" stroke="#505050" stroke-width="1.5"/><rect x="2.4" y="2.4" width="13.2" height="13.2" fill="none" stroke="#b4b4b4" stroke-width="0.8"/><ellipse cx="7.2" cy="12" rx="3.2" ry="2.7" transform="rotate(-30 7.2 12)" fill="#454545"/><path d="M9.6 6.8 L12.8 3.6 L14.8 4.6 L14.8 13.2 Q13.5 14.8 11.5 14.5 Q10.3 10.5 9.6 6.8 Z" fill="#484848"/></svg></div><span class="c" style="left:160.2px;transform:scaleX(0.88)">Examined</span><span class="c" style="left:250.1px;transform:scaleX(0.88)">ID_9CH717061</span><span class="c" style="left:385.8px;transform:scaleX(0.915)">HONG GIL DONG</span><div class="sexo" style="left:508.4px"></div><span class="c" style="left:556.8px;transform:scaleX(0.88)">000V</span><span class="c" style="left:641.0px;transform:scaleX(0.86)">BRAIN</span><span class="c" style="left:718.6px;transform:scaleX(0.905)">No Suspected ICH</span><span class="c" style="left:841.6px;transform:scaleX(0.862)">CTNSC#PR</span><span class="c" style="left:928.6px;transform:scaleX(0.85)">BCH</span><span class="c" style="left:1029.6px;transform:scaleX(0.89)">SK C&amp;C</span></div>
<div class="row" style="top:412.26px"><div class="cb"></div><div class="tri"></div><div class="sicon"><svg width="18" height="18" viewBox="0 0 18 18"><rect x="1" y="0.9" width="16" height="16" rx="2" fill="#78c266" stroke="#4b5842" stroke-width="1.8"/><ellipse cx="8.6" cy="6.4" rx="2.5" ry="1.6" fill="#45703c"/><ellipse cx="8.6" cy="10.8" rx="2.6" ry="2" fill="#45703c"/></svg></div><span class="c" style="left:160.2px;transform:scaleX(0.88)">Verified</span><span class="c" style="left:250.1px;transform:scaleX(0.88)">ID_60137231</span><span class="c" style="left:385.8px;transform:scaleX(0.915)">HONG GIL DONG</span><div class="sexo" style="left:508.4px"></div><span class="c" style="left:556.8px;transform:scaleX(0.88)">000V</span><span class="c" style="left:641.0px;transform:scaleX(0.86)">BRAIN</span><span class="c" style="left:718.6px;transform:scaleX(0.905)">No Suspected ICH</span><span class="c" style="left:841.6px;transform:scaleX(0.862)">CTNSC#PR</span><span class="c" style="left:928.6px;transform:scaleX(0.85)">BCH</span><span class="c" style="left:1029.6px;transform:scaleX(0.89)">SK C&amp;C</span></div>
<div class="row" style="top:435.18px"><div class="cb"></div><div class="tri"></div><div class="sicon"><svg width="18" height="18" viewBox="0 0 18 18"><rect x="0.8" y="0.8" width="16.4" height="16.4" rx="2" fill="#8f8f8f" stroke="#505050" stroke-width="1.5"/><rect x="2.4" y="2.4" width="13.2" height="13.2" fill="none" stroke="#b4b4b4" stroke-width="0.8"/><ellipse cx="7.2" cy="12" rx="3.2" ry="2.7" transform="rotate(-30 7.2 12)" fill="#454545"/><path d="M9.6 6.8 L12.8 3.6 L14.8 4.6 L14.8 13.2 Q13.5 14.8 11.5 14.5 Q10.3 10.5 9.6 6.8 Z" fill="#484848"/></svg></div><span class="c" style="left:160.2px;transform:scaleX(0.88)">Examined</span><span class="c" style="left:250.1px;transform:scaleX(0.88)">ID_FD8FCDGF</span><span class="c" style="left:385.8px;transform:scaleX(0.915)">HONG GIL DONG</span><div class="sexo" style="left:508.4px"></div><span class="c" style="left:556.8px;transform:scaleX(0.88)">000V</span><span class="c" style="left:641.0px;transform:scaleX(0.86)">BRAIN</span><span class="c" style="left:718.6px;transform:scaleX(0.905)">No Suspected ICH</span><span class="c" style="left:841.6px;transform:scaleX(0.817)">CTNSCWPR</span><span class="c" style="left:928.6px;transform:scaleX(0.85)">BCH</span><span class="c" style="left:1029.6px;transform:scaleX(0.89)">SK C&amp;C</span></div>
<div class="row" style="top:458.10px"><div class="cb"></div><div class="tri"></div><div class="sicon"><svg width="18" height="18" viewBox="0 0 18 18"><rect x="0.8" y="0.8" width="16.4" height="16.4" rx="2" fill="#8f8f8f" stroke="#505050" stroke-width="1.5"/><rect x="2.4" y="2.4" width="13.2" height="13.2" fill="none" stroke="#b4b4b4" stroke-width="0.8"/><ellipse cx="7.2" cy="12" rx="3.2" ry="2.7" transform="rotate(-30 7.2 12)" fill="#454545"/><path d="M9.6 6.8 L12.8 3.6 L14.8 4.6 L14.8 13.2 Q13.5 14.8 11.5 14.5 Q10.3 10.5 9.6 6.8 Z" fill="#484848"/></svg></div><span class="c" style="left:160.2px;transform:scaleX(0.88)">Examined</span><span class="c" style="left:250.1px;transform:scaleX(0.88)">ID_SCXCXXA4</span><span class="c" style="left:385.8px;transform:scaleX(0.915)">HONG GIL DONG</span><div class="sexo" style="left:508.4px"></div><span class="c" style="left:556.8px;transform:scaleX(0.88)">000V</span><span class="c" style="left:641.0px;transform:scaleX(0.86)">BRAIN</span><span class="c" style="left:718.6px;transform:scaleX(0.905)">Suspected ICH</span><span class="c" style="left:841.6px;transform:scaleX(0.817)">CTNSCWPR</span><span class="c" style="left:928.6px;transform:scaleX(0.85)">BCH</span><span class="c" style="left:1029.6px;transform:scaleX(0.89)">SK C&amp;C</span></div>
<div class="row" style="top:481.02px"><div class="cb"></div><div class="tri"></div><div class="sicon"><svg width="18" height="18" viewBox="0 0 18 18"><rect x="0.8" y="0.8" width="16.4" height="16.4" rx="2" fill="#8f8f8f" stroke="#505050" stroke-width="1.5"/><rect x="2.4" y="2.4" width="13.2" height="13.2" fill="none" stroke="#b4b4b4" stroke-width="0.8"/><ellipse cx="7.2" cy="12" rx="3.2" ry="2.7" transform="rotate(-30 7.2 12)" fill="#454545"/><path d="M9.6 6.8 L12.8 3.6 L14.8 4.6 L14.8 13.2 Q13.5 14.8 11.5 14.5 Q10.3 10.5 9.6 6.8 Z" fill="#484848"/></svg></div><span class="c" style="left:160.2px;transform:scaleX(0.88)">Examined</span><span class="c" style="left:250.1px;transform:scaleX(0.88)">ID_DBCTYPB4</span><span class="c" style="left:385.8px;transform:scaleX(0.915)">HONG GIL DONG</span><div class="sexo" style="left:508.4px"></div><span class="c" style="left:556.8px;transform:scaleX(0.88)">000V</span><span class="c" style="left:641.0px;transform:scaleX(0.86)">BRAIN</span><span class="c" style="left:718.6px;transform:scaleX(0.905)">Suspected ICH</span><span class="c" style="left:841.6px;transform:scaleX(0.817)">CTNSCWPR</span><span class="c" style="left:928.6px;transform:scaleX(0.85)">BCH</span><span class="c" style="left:1029.6px;transform:scaleX(0.89)">SK C&amp;C</span></div>
<div class="row" style="top:503.94px"><div class="cb"></div><div class="tri"></div><div class="sicon"><svg width="18" height="18" viewBox="0 0 18 18"><rect x="0.8" y="0.8" width="16.4" height="16.4" rx="2" fill="#8f8f8f" stroke="#505050" stroke-width="1.5"/><rect x="2.4" y="2.4" width="13.2" height="13.2" fill="none" stroke="#b4b4b4" stroke-width="0.8"/><ellipse cx="7.2" cy="12" rx="3.2" ry="2.7" transform="rotate(-30 7.2 12)" fill="#454545"/><path d="M9.6 6.8 L12.8 3.6 L14.8 4.6 L14.8 13.2 Q13.5 14.8 11.5 14.5 Q10.3 10.5 9.6 6.8 Z" fill="#484848"/></svg></div><span class="c" style="left:160.2px;transform:scaleX(0.88)">Examined</span><span class="c" style="left:250.1px;transform:scaleX(0.88)">ID_7DC2X42D2</span><span class="c" style="left:385.8px;transform:scaleX(0.915)">HONG GIL DONG</span><div class="sexo" style="left:508.4px"></div><span class="c" style="left:556.8px;transform:scaleX(0.88)">000V</span><span class="c" style="left:641.0px;transform:scaleX(0.86)">BRAIN</span><span class="c" style="left:718.6px;transform:scaleX(0.905)">Suspected ICH</span><span class="c" style="left:841.6px;transform:scaleX(0.817)">CTNSCWPR</span><span class="c" style="left:928.6px;transform:scaleX(0.85)">BCH</span><span class="c" style="left:1029.6px;transform:scaleX(0.89)">SK C&amp;C</span></div>
<div class="row sel" style="top:526.86px"><div class="cb chk"><svg width="12.4" height="11.6" viewBox="0 0 12.4 11.6"><rect x="0" y="0" width="12.4" height="11.6" fill="#eaf3fc"/><path d="M2.4 5.8 L5 8.4 L10 3.2" stroke="#3f6fa8" stroke-width="2.4" fill="none" stroke-linecap="round" stroke-linejoin="round"/></svg></div><div class="tri"></div><div class="sicon"><svg width="18" height="18" viewBox="0 0 18 18"><rect x="0.8" y="0.8" width="16.4" height="16.4" rx="2" fill="#8f8f8f" stroke="#505050" stroke-width="1.5"/><rect x="2.4" y="2.4" width="13.2" height="13.2" fill="none" stroke="#b4b4b4" stroke-width="0.8"/><ellipse cx="7.2" cy="12" rx="3.2" ry="2.7" transform="rotate(-30 7.2 12)" fill="#454545"/><path d="M9.6 6.8 L12.8 3.6 L14.8 4.6 L14.8 13.2 Q13.5 14.8 11.5 14.5 Q10.3 10.5 9.6 6.8 Z" fill="#484848"/></svg></div><span class="c" style="left:160.2px;transform:scaleX(0.88)">Examined</span><span class="c" style="left:250.1px;transform:scaleX(0.88)">ID_3NDBCB41</span><span class="c" style="left:385.8px;transform:scaleX(0.915)">HONG GIL DONG</span><div class="sexo" style="left:508.4px"></div><span class="c" style="left:556.8px;transform:scaleX(0.88)">000V</span><span class="c" style="left:641.0px;transform:scaleX(0.86)">BRAIN</span><span class="c" style="left:718.6px;transform:scaleX(0.905)">Suspected ICH</span><span class="c" style="left:841.6px;transform:scaleX(0.817)">CTNSCWPR</span><span class="c" style="left:928.6px;transform:scaleX(0.85)">BCH</span><span class="c" style="left:1029.6px;transform:scaleX(0.89)">SK C&amp;C</span></div>
<div class="row" style="top:549.78px"><div class="cb"></div><div class="tri"></div><div class="sicon"><svg width="18" height="18" viewBox="0 0 18 18"><rect x="1" y="0.9" width="16" height="16" rx="2" fill="#78c266" stroke="#4b5842" stroke-width="1.8"/><ellipse cx="8.6" cy="6.4" rx="2.5" ry="1.6" fill="#45703c"/><ellipse cx="8.6" cy="10.8" rx="2.6" ry="2" fill="#45703c"/></svg></div><span class="c" style="left:160.2px;transform:scaleX(0.88)">Verified</span><span class="c" style="left:250.1px;transform:scaleX(0.88)">ID_9I2B4A137</span><span class="c" style="left:385.8px;transform:scaleX(0.915)">HONG GIL DONG</span><div class="sexo" style="left:508.4px"></div><span class="c" style="left:556.8px;transform:scaleX(0.88)">000V</span><span class="c" style="left:641.0px;transform:scaleX(0.86)">BRAIN</span><span class="c" style="left:718.6px;transform:scaleX(0.905)">Suspected ICH</span><span class="c" style="left:841.6px;transform:scaleX(0.816)">CTNXCWRD...</span><span class="c" style="left:928.6px;transform:scaleX(0.85)">BCH</span><span class="c" style="left:1029.6px;transform:scaleX(0.89)">SK C&amp;C</span></div>
<div class="row" style="top:572.70px"><div class="cb"></div><div class="tri"></div><div class="sicon"><svg width="18" height="18" viewBox="0 0 18 18"><rect x="0.8" y="0.8" width="16.4" height="16.4" rx="2" fill="#8f8f8f" stroke="#505050" stroke-width="1.5"/><rect x="2.4" y="2.4" width="13.2" height="13.2" fill="none" stroke="#b4b4b4" stroke-width="0.8"/><ellipse cx="7.2" cy="12" rx="3.2" ry="2.7" transform="rotate(-30 7.2 12)" fill="#454545"/><path d="M9.6 6.8 L12.8 3.6 L14.8 4.6 L14.8 13.2 Q13.5 14.8 11.5 14.5 Q10.3 10.5 9.6 6.8 Z" fill="#484848"/></svg></div><span class="c" style="left:160.2px;transform:scaleX(0.88)">Examined</span><span class="c" style="left:250.1px;transform:scaleX(0.88)">ID_A6492135</span><span class="c" style="left:385.8px;transform:scaleX(0.915)">HONG GIL DONG</span><div class="sexo" style="left:508.4px"></div><span class="c" style="left:556.8px;transform:scaleX(0.88)">000V</span><span class="c" style="left:641.0px;transform:scaleX(0.86)">BRAIN</span><span class="c" style="left:718.6px;transform:scaleX(0.905)">Suspected ICH</span><span class="c" style="left:841.6px;transform:scaleX(0.817)">CTNXCWPR</span><span class="c" style="left:928.6px;transform:scaleX(0.85)">BCH</span><span class="c" style="left:1029.6px;transform:scaleX(0.89)">SK C&amp;C</span></div>
<div class="row" style="top:595.62px"><div class="cb"></div><div class="tri"></div><div class="sicon"><svg width="18" height="18" viewBox="0 0 18 18"><rect x="0.8" y="0.8" width="16.4" height="16.4" rx="2" fill="#8f8f8f" stroke="#505050" stroke-width="1.5"/><rect x="2.4" y="2.4" width="13.2" height="13.2" fill="none" stroke="#b4b4b4" stroke-width="0.8"/><ellipse cx="7.2" cy="12" rx="3.2" ry="2.7" transform="rotate(-30 7.2 12)" fill="#454545"/><path d="M9.6 6.8 L12.8 3.6 L14.8 4.6 L14.8 13.2 Q13.5 14.8 11.5 14.5 Q10.3 10.5 9.6 6.8 Z" fill="#484848"/></svg></div><span class="c" style="left:160.2px;transform:scaleX(0.88)">Examined</span><span class="c" style="left:250.1px;transform:scaleX(0.88)">ID_5023114C0</span><span class="c" style="left:385.8px;transform:scaleX(0.915)">HONG GIL DONG</span><div class="sexo" style="left:508.4px"></div><span class="c" style="left:556.8px;transform:scaleX(0.88)">000V</span><span class="c" style="left:641.0px;transform:scaleX(0.86)">BRAIN</span><span class="c" style="left:718.6px;transform:scaleX(0.905)">Suspected ICH</span><span class="c" style="left:841.6px;transform:scaleX(0.862)">CTNSC#PR</span><span class="c" style="left:928.6px;transform:scaleX(0.85)">BCH</span><span class="c" style="left:1029.6px;transform:scaleX(0.89)">SK C&amp;C</span></div>
<div class="row" style="top:618.54px"><div class="cb"></div><div class="tri"></div><div class="sicon"><svg width="18" height="18" viewBox="0 0 18 18"><rect x="0.8" y="0.8" width="16.4" height="16.4" rx="2" fill="#8f8f8f" stroke="#505050" stroke-width="1.5"/><rect x="2.4" y="2.4" width="13.2" height="13.2" fill="none" stroke="#b4b4b4" stroke-width="0.8"/><ellipse cx="7.2" cy="12" rx="3.2" ry="2.7" transform="rotate(-30 7.2 12)" fill="#454545"/><path d="M9.6 6.8 L12.8 3.6 L14.8 4.6 L14.8 13.2 Q13.5 14.8 11.5 14.5 Q10.3 10.5 9.6 6.8 Z" fill="#484848"/></svg></div><span class="c" style="left:160.2px;transform:scaleX(0.88)">Examined</span><span class="c" style="left:250.1px;transform:scaleX(0.88)">ID_67134312</span><span class="c" style="left:385.8px;transform:scaleX(0.915)">HONG GIL DONG</span><div class="sexo" style="left:508.4px"></div><span class="c" style="left:556.8px;transform:scaleX(0.88)">000V</span><span class="c" style="left:641.0px;transform:scaleX(0.86)">BRAIN</span><span class="c" style="left:718.6px;transform:scaleX(0.905)">Suspected ICH</span><span class="c" style="left:841.6px;transform:scaleX(0.862)">CTNSC#PR</span><span class="c" style="left:928.6px;transform:scaleX(0.85)">BCH</span><span class="c" style="left:1029.6px;transform:scaleX(0.89)">SK C&amp;C</span></div>
<div class="row" style="top:641.46px"><div class="cb"></div><div class="tri"></div><div class="sicon"><svg width="18" height="18" viewBox="0 0 18 18"><rect x="0.8" y="0.8" width="16.4" height="16.4" rx="2" fill="#8f8f8f" stroke="#505050" stroke-width="1.5"/><rect x="2.4" y="2.4" width="13.2" height="13.2" fill="none" stroke="#b4b4b4" stroke-width="0.8"/><ellipse cx="7.2" cy="12" rx="3.2" ry="2.7" transform="rotate(-30 7.2 12)" fill="#454545"/><path d="M9.6 6.8 L12.8 3.6 L14.8 4.6 L14.8 13.2 Q13.5 14.8 11.5 14.5 Q10.3 10.5 9.6 6.8 Z" fill="#484848"/></svg></div><span class="c" style="left:160.2px;transform:scaleX(0.88)">Examined</span><span class="c" style="left:250.1px;transform:scaleX(0.88)">ID_627TD006</span><span class="c" style="left:385.8px;transform:scaleX(0.915)">HONG GIL DONG</span><div class="sexo" style="left:508.4px"></div><span class="c" style="left:556.8px;transform:scaleX(0.88)">000V</span><span class="c" style="left:641.0px;transform:scaleX(0.86)">BRAIN</span><span class="c" style="left:718.6px;transform:scaleX(0.905)">Suspected ICH</span><span class="c" style="left:841.6px;transform:scaleX(0.817)">CTNSCWPR</span><span class="c" style="left:928.6px;transform:scaleX(0.85)">BCH</span><span class="c" style="left:1029.6px;transform:scaleX(0.89)">SK C&amp;C</span></div>
<div class="row" style="top:664.38px"><div class="cb"></div><div class="tri"></div><div class="sicon"><svg width="18" height="18" viewBox="0 0 18 18"><rect x="0.8" y="0.8" width="16.4" height="16.4" rx="2" fill="#8f8f8f" stroke="#505050" stroke-width="1.5"/><rect x="2.4" y="2.4" width="13.2" height="13.2" fill="none" stroke="#b4b4b4" stroke-width="0.8"/><ellipse cx="7.2" cy="12" rx="3.2" ry="2.7" transform="rotate(-30 7.2 12)" fill="#454545"/><path d="M9.6 6.8 L12.8 3.6 L14.8 4.6 L14.8 13.2 Q13.5 14.8 11.5 14.5 Q10.3 10.5 9.6 6.8 Z" fill="#484848"/></svg></div><span class="c" style="left:160.2px;transform:scaleX(0.88)">Examined</span><span class="c" style="left:250.1px;transform:scaleX(0.88)">ID_28980096</span><span class="c" style="left:385.8px;transform:scaleX(0.915)">HONG GIL DONG</span><div class="sexo" style="left:508.4px"></div><span class="c" style="left:556.8px;transform:scaleX(0.88)">000V</span><span class="c" style="left:641.0px;transform:scaleX(0.86)">BRAIN</span><span class="c" style="left:718.6px;transform:scaleX(0.905)">Suspected ICH</span><span class="c" style="left:841.6px;transform:scaleX(0.862)">CTNSC#PR</span><span class="c" style="left:928.6px;transform:scaleX(0.85)">BCH</span><span class="c" style="left:1029.6px;transform:scaleX(0.89)">SK C&amp;C</span></div>
<div class="row" style="top:687.30px"><div class="cb"></div><div class="tri"></div><div class="sicon"><svg width="18" height="18" viewBox="0 0 18 18"><rect x="0.8" y="0.8" width="16.4" height="16.4" rx="2" fill="#8f8f8f" stroke="#505050" stroke-width="1.5"/><rect x="2.4" y="2.4" width="13.2" height="13.2" fill="none" stroke="#b4b4b4" stroke-width="0.8"/><ellipse cx="7.2" cy="12" rx="3.2" ry="2.7" transform="rotate(-30 7.2 12)" fill="#454545"/><path d="M9.6 6.8 L12.8 3.6 L14.8 4.6 L14.8 13.2 Q13.5 14.8 11.5 14.5 Q10.3 10.5 9.6 6.8 Z" fill="#484848"/></svg></div><span class="c" style="left:160.2px;transform:scaleX(0.88)">Examined</span><span class="c" style="left:250.1px;transform:scaleX(0.88)">ID_82PE00DA</span><span class="c" style="left:385.8px;transform:scaleX(0.915)">HONG GIL DONG</span><div class="sexo" style="left:508.4px"></div><span class="c" style="left:556.8px;transform:scaleX(0.88)">000V</span><span class="c" style="left:641.0px;transform:scaleX(0.86)">BRAIN</span><span class="c" style="left:718.6px;transform:scaleX(0.905)">Suspected ICH</span><span class="c" style="left:841.6px;transform:scaleX(0.862)">CTNSC#PR</span><span class="c" style="left:928.6px;transform:scaleX(0.85)">BCH</span><span class="c" style="left:1029.6px;transform:scaleX(0.89)">SK C&amp;C</span></div>
<div class="row" style="top:710.22px"><div class="cb"></div><div class="tri"></div><div class="sicon"><svg width="18" height="18" viewBox="0 0 18 18"><rect x="0.8" y="0.8" width="16.4" height="16.4" rx="2" fill="#8f8f8f" stroke="#505050" stroke-width="1.5"/><rect x="2.4" y="2.4" width="13.2" height="13.2" fill="none" stroke="#b4b4b4" stroke-width="0.8"/><ellipse cx="7.2" cy="12" rx="3.2" ry="2.7" transform="rotate(-30 7.2 12)" fill="#454545"/><path d="M9.6 6.8 L12.8 3.6 L14.8 4.6 L14.8 13.2 Q13.5 14.8 11.5 14.5 Q10.3 10.5 9.6 6.8 Z" fill="#484848"/></svg></div><span class="c" style="left:160.2px;transform:scaleX(0.88)">Examined</span><span class="c" style="left:250.1px;transform:scaleX(0.88)">ID_2H454091</span><span class="c" style="left:385.8px;transform:scaleX(0.915)">HONG GIL DONG</span><div class="sexo" style="left:508.4px"></div><span class="c" style="left:556.8px;transform:scaleX(0.88)">000V</span><span class="c" style="left:641.0px;transform:scaleX(0.86)">BRAIN</span><span class="c" style="left:718.6px;transform:scaleX(0.905)">Suspected ICH</span><span class="c" style="left:841.6px;transform:scaleX(0.817)">CTNSCWPR</span><span class="c" style="left:928.6px;transform:scaleX(0.85)">BCH</span><span class="c" style="left:1029.6px;transform:scaleX(0.89)">SK C&amp;C</span></div></div>
<div id="vscroll"></div>
<div id="vthumb"></div>
<svg class="ico" style="left:1380.8px;top:28px" width="10" height="8" viewBox="0 0 10 8"><path d="M1 6.5 L5 2.5 L9 6.5" stroke="#666" stroke-width="1.8" fill="none"/></svg>
<svg class="ico" style="left:1381.3px;top:731px" width="10" height="8" viewBox="0 0 10 8"><path d="M1 1.5 H9 L5 6.5 Z" fill="#555"/></svg>
<div id="hscroll"></div>
<div id="hthumb"></div>
<svg class="ico" style="left:4.800000000000011px;top:746px" width="8" height="10" viewBox="0 0 8 10"><path d="M5.8 1.5 L2.2 5 L5.8 8.5" stroke="#666" stroke-width="1.5" fill="none"/></svg>
<svg class="ico" style="left:1363.8px;top:746px" width="8" height="10" viewBox="0 0 8 10"><path d="M2.2 1.5 L5.8 5 L2.2 8.5" stroke="#666" stroke-width="1.5" fill="none"/></svg>
<div id="corner"></div>
</div>
<div id="purple"></div>
</div>
</body></html>
